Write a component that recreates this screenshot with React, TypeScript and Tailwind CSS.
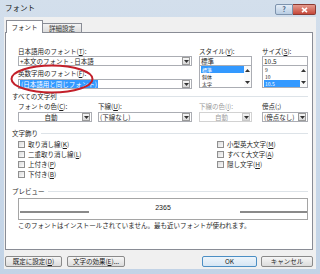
import React from "react";

const FONT = "font-['Noto_Sans_CJK_JP','Noto_Sans',sans-serif]";

function Tri({ up = false }: { up?: boolean }) {
  return (
    <svg width="5" height="3" viewBox="0 0 5 3">
      <path d={up ? "M0 3H5L2.5 0Z" : "M0 0H5L2.5 3Z"} fill="#333" />
    </svg>
  );
}

function DropBtn({ disabled = false }: { disabled?: boolean }) {
  return (
    <div
      className={`w-[8px] h-[8px] mr-[1px] border ${
        disabled ? "border-[#c8c8c8]" : "border-[#9a9a9a]"
      } bg-gradient-to-b from-[#f6f6f6] to-[#d8d8d8] flex items-center justify-center`}
    >
      <Tri />
    </div>
  );
}

function Combo({
  text,
  center = false,
  disabled = false,
  noBtn = false,
  children,
}: {
  text?: string;
  center?: boolean;
  disabled?: boolean;
  noBtn?: boolean;
  children?: React.ReactNode;
}) {
  return (
    <div
      className={`w-full h-[10px] border ${
        disabled ? "border-[#d2d2d2]" : "border-[#abadb3]"
      } bg-white flex items-center`}
    >
      <div
        className={`flex-1 pl-[1px] leading-[8px] whitespace-nowrap overflow-hidden ${
          center ? "text-center" : ""
        } ${disabled ? "text-[#a0a0a0]" : ""}`}
      >
        {children ?? text}
      </div>
      {!noBtn && <DropBtn disabled={disabled} />}
    </div>
  );
}

function ListBox({ items, sel }: { items: string[]; sel: number }) {
  return (
    <div className="w-full h-[22px] border border-[#abadb3] border-t-0 bg-white flex">
      <div className="flex-1 flex flex-col pl-[1px]">
        {items.map((it, i) => (
          <div
            key={it}
            className={`h-[7px] leading-[7px] text-[5px] pl-[1px] ${
              i === sel ? "bg-[#3399ff] text-white" : ""
            }`}
          >
            {it}
          </div>
        ))}
      </div>
      <div className="w-[7px] flex flex-col items-center justify-between py-[3px] bg-[#fafafa]">
        <Tri up />
        <Tri />
      </div>
    </div>
  );
}

function Check({ label }: { label: React.ReactNode }) {
  return (
    <div className="h-[10px] flex items-center">
      <div className="w-[7px] h-[7px] border border-[#8f8f8f] bg-gradient-to-br from-[#dcdcdc] to-[#fbfbfb]" />
      <div className="ml-[3px] leading-[10px]">{label}</div>
    </div>
  );
}

function Section({ title }: { title: string }) {
  return (
    <div className="h-[10px] flex items-center">
      <div className="leading-[10px]">{title}</div>
      <div className="flex-1 ml-[3px] border-t border-[#dde3e8]" />
    </div>
  );
}

function Btn({ w, children, def = false }: { w: string; children: React.ReactNode; def?: boolean }) {
  return (
    <div
      className={`${w} h-[11px] rounded-[2px] border ${
        def ? "border-[#4c8fc4] from-[#eef5fb] to-[#d6e6f4]" : "border-[#8a8a8a] from-[#f6f6f6] to-[#dcdcdc]"
      } bg-gradient-to-b flex items-center justify-center leading-[9px]`}
    >
      {children}
    </div>
  );
}

export default function App() {
  return (
    <div
      className={`${FONT} w-[320px] h-[274px] bg-gradient-to-b from-[#d3dfec] to-[#c2d3e6] flex flex-col text-[6.5px] text-[#1e1e1e] overflow-hidden`}
    >
      {/* title bar */}
      <div className="h-[17px] flex items-start justify-between">
        <div className="pl-[5px] pt-[3px] text-[7.5px] leading-[10px] text-[#222]">フォント</div>
        <div className="flex mt-[4px] mr-[4px]">
          <div className="w-[18px] h-[11px] rounded-l-[2px] border border-[#7d93ad] bg-gradient-to-b from-[#e4edf7] to-[#b9cde3] flex items-center justify-center text-[7px] leading-[7px] text-[#44607f] font-bold">
            ?
          </div>
          <div className="w-[23px] h-[11px] rounded-r-[2px] border border-[#8a3a32] border-l-0 bg-gradient-to-b from-[#e49a8e] to-[#c5473a] flex items-center justify-center">
            <svg width="7" height="6" viewBox="0 0 7 6">
              <path d="M1 0.8L6 5.2M6 0.8L1 5.2" stroke="#fff" strokeWidth="1.6" />
            </svg>
          </div>
        </div>
      </div>

      {/* client area */}
      <div className="mx-[4px] h-[252px] bg-[#f0f0f0] flex flex-col pl-[1px] pr-[3px]">
        {/* tabs */}
        <div className="h-[15px] flex items-end pl-[1px] relative z-10">
          <div className="w-[37px] h-[13px] -mb-[1px] bg-white border border-[#898c95] border-b-0 flex items-center justify-center leading-[10px]">
            フォント
          </div>
          <div className="w-[39px] h-[9px] bg-gradient-to-b from-[#f3f3f3] to-[#dcdcdc] border border-[#898c95] border-l-0 border-b-0 flex items-center justify-center leading-[8px] text-[#333]">
            詳細設定
          </div>
        </div>

        {/* panel */}
        <div className="relative h-[218px] bg-white border border-[#898c95] pt-[13px] pl-[6px] pr-[4px] flex flex-col">
          {/* row A */}
          <div className="flex items-start ml-[6px]">
            <div className="w-[174px] flex flex-col">
              <div className="h-[10px] leading-[10px]">
                日本語用のフォント(<span className="underline">T</span>):
              </div>
              <Combo text="+本文のフォント - 日本語" />
              <div className="h-[10px] leading-[10px] mt-[2px]">
                英数字用のフォント(<span className="underline">F</span>):
              </div>
              <div className="mt-[1px]">
                <Combo>
                  <span className="bg-[#3399ff] text-white px-[1px]">(日本語用と同じフォント)</span>
                </Combo>
              </div>
            </div>
            <div className="w-[53px] ml-[7px] flex flex-col">
              <div className="h-[10px] leading-[10px]">
                スタイル(<span className="underline">Y</span>):
              </div>
              <Combo text="標準" noBtn />
              <ListBox items={["標準", "斜体", "太字"]} sel={0} />
            </div>
            <div className="w-[46px] ml-[10px] flex flex-col">
              <div className="h-[10px] leading-[10px]">
                サイズ(<span className="underline">S</span>):
              </div>
              <Combo text="10.5" noBtn />
              <ListBox items={["9", "10", "10.5"]} sel={2} />
            </div>
          </div>

          <div className="mt-[2px]">
            <Section title="すべての文字列" />
          </div>

          {/* row B */}
          <div className="flex items-start ml-[6px]">
            <div className="w-[74px] flex flex-col">
              <div className="h-[10px] leading-[10px]">
                フォントの色(<span className="underline">C</span>):
              </div>
              <div className="mt-[1px]">
                <Combo text="自動" center />
              </div>
            </div>
            <div className="w-[94px] ml-[6px] flex flex-col">
              <div className="h-[10px] leading-[10px]">
                下線(<span className="underline">U</span>):
              </div>
              <div className="mt-[1px]">
                <Combo text="(下線なし)" />
              </div>
            </div>
            <div className="w-[53px] ml-[7px] flex flex-col">
              <div className="h-[10px] leading-[10px] text-[#9a9a9a]">
                下線の色(<span className="underline">I</span>):
              </div>
              <div className="mt-[1px]">
                <Combo text="自動" center disabled />
              </div>
            </div>
            <div className="w-[46px] ml-[10px] flex flex-col">
              <div className="h-[10px] leading-[10px]">傍点(;)</div>
              <div className="mt-[1px]">
                <Combo text="(傍点なし)" />
              </div>
            </div>
          </div>

          <div className="mt-[6px]">
            <Section title="文字飾り" />
          </div>

          <div className="flex ml-[6px] mt-[1px]">
            <div className="w-[199px] flex flex-col">
              <Check label={<>取り消し線(<span className="underline">K</span>)</>} />
              <Check label={<>二重取り消し線(<span className="underline">L</span>)</>} />
              <Check label={<>上付き(<span className="underline">P</span>)</>} />
              <Check label={<>下付き(<span className="underline">B</span>)</>} />
            </div>
            <div className="flex flex-col">
              <Check label={<>小型英大文字(<span className="underline">M</span>)</>} />
              <Check label={<>すべて大文字(<span className="underline">A</span>)</>} />
              <Check label={<>隠し文字(<span className="underline">H</span>)</>} />
            </div>
          </div>

          <div className="mt-[7px]">
            <Section title="プレビュー" />
          </div>

          <div className="ml-[6px] mt-[2px] w-[290px] h-[22px] border border-[#a5a5a5] bg-white flex items-end pb-[6px] relative">
            <div className="w-[69px] h-[2px] bg-[#8a8a8a] ml-[1px]" />
            <div className="flex-1" />
            <div className="w-[67px] h-[2px] bg-[#8a8a8a]" />
            <div className="absolute left-0 right-0 top-[4px] text-center text-[7px] leading-[9px] font-['Liberation_Sans',sans-serif] text-[#222]">
              2365
            </div>
          </div>

          <div className="ml-[6px] mt-[1px] h-[9px] leading-[9px] whitespace-nowrap">
            このフォントはインストールされていません。最も近いフォントが使われます。
          </div>

          {/* red ellipse annotation */}
          <svg
            className="absolute left-[4px] top-[31px]"
            width="84"
            height="30"
            viewBox="0 0 84 30"
          >
            <ellipse cx="42" cy="15" rx="40.5" ry="13.5" fill="none" stroke="#c3202a" strokeWidth="2" />
          </svg>
        </div>

        {/* bottom buttons */}
        <div className="mt-[6px] flex">
          <Btn w="w-[57px]">
            既定に設定(<span className="underline">D</span>)
          </Btn>
          <div className="ml-[5px]">
            <Btn w="w-[58px]">
              文字の効果(<span className="underline">E</span>)...
            </Btn>
          </div>
          <div className="flex-1" />
          <Btn w="w-[55px]" def>
            OK
          </Btn>
          <div className="ml-[4px]">
            <Btn w="w-[52px]">キャンセル</Btn>
          </div>
        </div>
      </div>
    </div>
  );
}
